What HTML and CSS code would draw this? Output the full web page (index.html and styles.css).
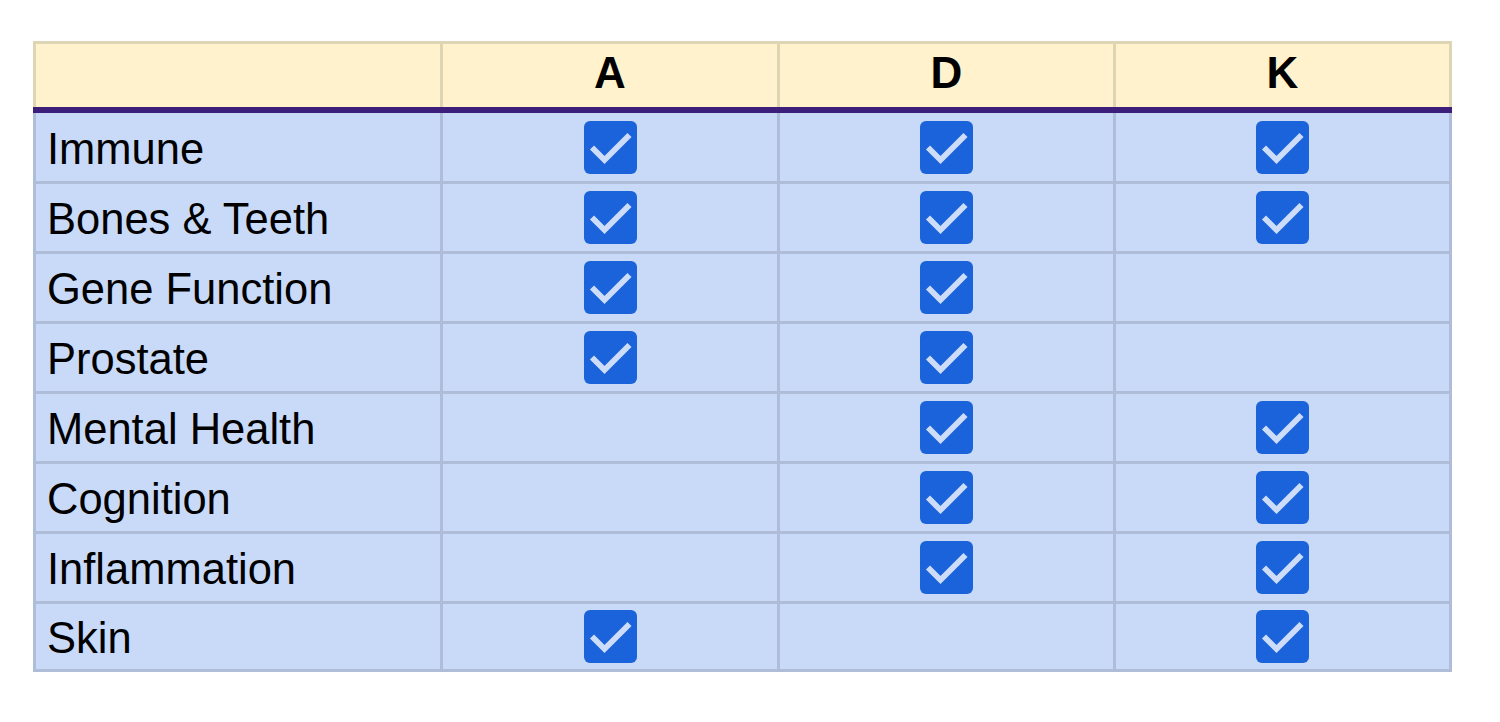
FILE: index.html
```html
<!DOCTYPE html>
<html>
<head>
<meta charset="utf-8">
<link rel="stylesheet" href="styles.css">
</head>
<body>
<svg width="0" height="0" class="defs">
  <defs>
    <symbol id="cb" viewBox="0 0 53 53">
      <rect x="0" y="0" width="53" height="53" rx="6" fill="#1b63db"/>
      <polyline points="8,26.5 20.5,39 45.5,14" fill="none" stroke="#cddcf8" stroke-width="5.8"/>
    </symbol>
  </defs>
</svg>
<div class="sheet">
  <div class="head">
    <div class="hc"></div>
    <div class="hc">A</div>
    <div class="hc">D</div>
    <div class="hc">K</div>
  </div>
  <div class="rule"></div>
  <div class="body">
    <div class="lab">Immune</div>
    <div class="c"><svg class="chk"><use href="#cb"/></svg></div>
    <div class="c"><svg class="chk"><use href="#cb"/></svg></div>
    <div class="c"><svg class="chk"><use href="#cb"/></svg></div>

    <div class="lab">Bones &amp; Teeth</div>
    <div class="c"><svg class="chk"><use href="#cb"/></svg></div>
    <div class="c"><svg class="chk"><use href="#cb"/></svg></div>
    <div class="c"><svg class="chk"><use href="#cb"/></svg></div>

    <div class="lab">Gene Function</div>
    <div class="c"><svg class="chk"><use href="#cb"/></svg></div>
    <div class="c"><svg class="chk"><use href="#cb"/></svg></div>
    <div class="c"></div>

    <div class="lab">Prostate</div>
    <div class="c"><svg class="chk"><use href="#cb"/></svg></div>
    <div class="c"><svg class="chk"><use href="#cb"/></svg></div>
    <div class="c"></div>

    <div class="lab">Mental Health</div>
    <div class="c"></div>
    <div class="c"><svg class="chk"><use href="#cb"/></svg></div>
    <div class="c"><svg class="chk"><use href="#cb"/></svg></div>

    <div class="lab">Cognition</div>
    <div class="c"></div>
    <div class="c"><svg class="chk"><use href="#cb"/></svg></div>
    <div class="c"><svg class="chk"><use href="#cb"/></svg></div>

    <div class="lab">Inflammation</div>
    <div class="c"></div>
    <div class="c"><svg class="chk"><use href="#cb"/></svg></div>
    <div class="c"><svg class="chk"><use href="#cb"/></svg></div>

    <div class="lab">Skin</div>
    <div class="c"><svg class="chk"><use href="#cb"/></svg></div>
    <div class="c"></div>
    <div class="c"><svg class="chk"><use href="#cb"/></svg></div>
  </div>
</div>
</body>
</html>
```
FILE: styles.css
```css
html, body {
  margin: 0;
  padding: 0;
  background: #ffffff;
}
body {
  font-family: "Liberation Sans", Arial, sans-serif;
  color: #000000;
}
.defs {
  position: absolute;
  width: 0;
  height: 0;
}
.sheet {
  width: 1419px;
  margin: 41px 0 0 33px;
}
.head {
  display: grid;
  grid-template-columns: 404px 334px 333px 333px;
  grid-template-rows: 63px;
  column-gap: 3px;
  padding: 3px 3px 0 3px;
  background: #ddd5b4;
}
.hc {
  background: #fff2cc;
  display: flex;
  align-items: center;
  justify-content: center;
  font-weight: bold;
  font-size: 44px;
  padding-bottom: 6px;
  box-sizing: border-box;
}
.rule {
  height: 6px;
  background: #3c1f7a;
}
.body {
  display: grid;
  grid-template-columns: 404px 334px 333px 333px;
  grid-template-rows: 68px repeat(6, 67px) 65px;
  gap: 3px;
  padding: 0 3px 3px 3px;
  background: #b0bdd8;
}
.lab, .c {
  background: #c9daf8;
  display: flex;
  align-items: center;
}
.lab {
  font-size: 43.5px;
  padding: 4px 0 0 11px;
  box-sizing: border-box;
}
.c {
  justify-content: center;
}
.chk {
  width: 53px;
  height: 53px;
  display: block;
}
```
